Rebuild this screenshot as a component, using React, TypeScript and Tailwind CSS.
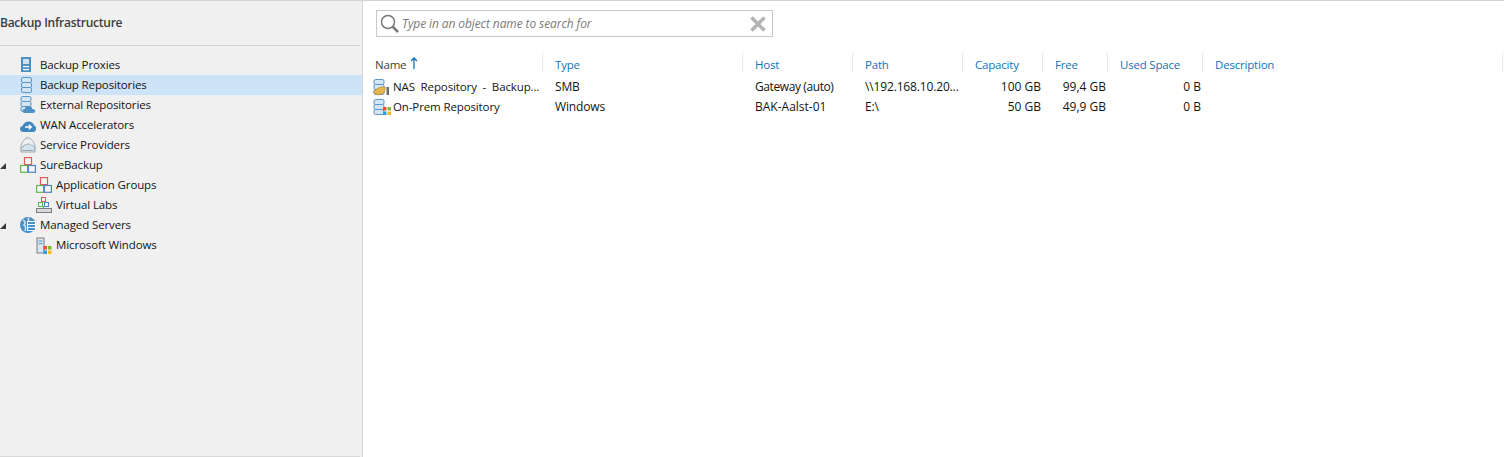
import type { ReactNode } from "react";

const font = { fontFamily: "'Open Sans', 'Noto Sans', sans-serif" };

function DbStack({ x = 0, y = 0, w = 10 }: { x?: number; y?: number; w?: number }) {
  return (
    <g transform={`translate(${x} ${y})`} fill="#d3e5f3" stroke="#5b97c6" strokeWidth="1">
      <rect x="0.5" y="0.5" width={w} height="5" rx="1.5" />
      <rect x="0.5" y="5.5" width={w} height="5" rx="1.5" />
      <rect x="0.5" y="10.5" width={w} height="5" rx="1.5" />
    </g>
  );
}

function WinFlag({ x, y, s = 4 }: { x: number; y: number; s?: number }) {
  return (
    <g transform={`translate(${x} ${y})`}>
      <rect x="0" y="0" width={s} height={s} fill="#e8512f" />
      <rect x={s + 1} y="0" width={s} height={s} fill="#7fba2c" />
      <rect x="0" y={s + 1} width={s} height={s} fill="#2a9fe0" />
      <rect x={s + 1} y={s + 1} width={s} height={s} fill="#fbbc11" />
    </g>
  );
}

function Blocks() {
  return (
    <g fill="#f5f5f5" strokeWidth="1.2">
      <rect x="4.500" y="0.600" width="7" height="7" stroke="#e25b5b" />
      <rect x="0.600" y="8.500" width="7" height="6.800" stroke="#5cb84a" />
      <rect x="8.400" y="8.500" width="7" height="6.800" stroke="#4a86c8" />
    </g>
  );
}

const icons: Record<string, ReactNode> = {
  proxy: (
    <>
      <rect x="1" y="0" width="10" height="15" fill="#4f90c3" />
      <rect x="3" y="2" width="6" height="5" fill="#cfe2f1" />
      <rect x="3" y="9" width="6" height="1.200" fill="#ffffff" />
      <rect x="3" y="12" width="6" height="1.200" fill="#ffffff" />
    </>
  ),
  repo: <DbStack x={1} y={0} />,
  external: (
    <>
      <DbStack x={0.500} y={-1} />
      <path d="M5 16c-1.600 0-2.500-.9-2.500-2s.9-2 2.200-2c.5-2 2-3 3.800-3 2 0 3.500 1.300 3.900 3 1.500 0 2.900.9 2.900 2s-1 2-2.300 2z" fill="#4f90c3" />
    </>
  ),
  wan: (
    <>
      <path d="M3.500 15C1.500 15 0 13.700 0 12c0-1.600 1.200-2.900 2.800-3.200C3.400 6.200 5.800 4.500 8.500 4.500c2.900 0 5.200 1.800 5.800 4.300 1.500.3 1.700 1 1.700 3 0 2-1 3.200-2.500 3.200z" fill="#3f87bd" />
      <path d="M5 9.300h3.800V7l3.700 3-3.700 3v-2.300H5z" fill="#ffffff" />
    </>
  ),
  provider: (
    <>
      <path d="M1 8.500C2.500 4 5 1.200 8 0.800c3 .4 5.500 3.200 7 7.700V15H1z" fill="#eef1f4" stroke="#9aa5ae" />
      <path d="M2.800 13.500c-1 0-1.800-.8-1.800-1.600 0-1 .9-1.700 2-1.700.5-2 2-3 3.500-2.500 1.200-1.200 4-1 5 .8 1.800 0 3.500 1.200 3.500 2.500 0 1.300-1 2.500-2.500 2.500z" fill="#d3e3f0" stroke="#9aa5ae" />
    </>
  ),
  surebackup: <Blocks />,
  labs: (
    <>
      <g fill="#f5f5f5" strokeWidth="1">
        <rect x="5.500" y="0.500" width="4" height="4" stroke="#e25b5b" />
        <rect x="2.500" y="5.500" width="4" height="4" stroke="#5cb84a" />
        <rect x="8.500" y="5.500" width="4" height="4" stroke="#4a86c8" />
      </g>
      <path d="M7.500 9.500v2" stroke="#7c7c7c" />
      <rect x="0.500" y="11.500" width="15" height="4" fill="#d5d9dd" stroke="#7c7c7c" />
    </>
  ),
  managed: (
    <>
      <circle cx="8" cy="8" r="8" fill="#4a8fc4" />
      <path d="M3 3c2 1 3 3 1 5 2 1 2 3 1 6M9 1c-1 1-1 2 0 3" stroke="#d7e7f3" fill="none" strokeWidth="1.500" />
      <rect x="7" y="4" width="9" height="10" fill="#ffffff" />
      <rect x="8" y="5" width="7" height="2" fill="#4a8fc4" />
      <rect x="8" y="8" width="7" height="2" fill="#4a8fc4" />
      <rect x="8" y="11" width="7" height="2" fill="#4a8fc4" />
    </>
  ),
  windows: (
    <>
      <rect x="1" y="1" width="7" height="15" fill="#d8e6f3" stroke="#7c7c7c" />
      <rect x="2.500" y="3.500" width="4" height="1.200" fill="#6c9fcb" />
      <rect x="2.500" y="6" width="4" height="1.200" fill="#6c9fcb" />
      <WinFlag x={7.500} y={9} s={3.500} />
    </>
  ),
  nas: (
    <>
      <DbStack x={0.500} y={0} />
      <path d="M0.500 13.500c2-3.500 5-5 8.500-5.500l3.500.5-1.500 5.500-6 2z" fill="#e8b64c" stroke="#b98a2a" strokeWidth="0.700" />
      <rect x="13.500" y="8" width="2.500" height="8" fill="#6b6b6b" />
    </>
  ),
  onprem: (
    <>
      <DbStack x={0.500} y={0} />
      <WinFlag x={10} y={8} s={3.500} />
    </>
  ),
};

function Icon({ name, className = "" }: { name: string; className?: string }) {
  return (
    <svg width="16" height="16" viewBox="0 0 16 16" className={`shrink-0 overflow-visible ${className}`}>
      {icons[name]}
    </svg>
  );
}

const tree = [
  { label: "Backup Proxies", icon: "proxy" },
  { label: "Backup Repositories", icon: "repo", selected: true },
  { label: "External Repositories", icon: "external" },
  { label: "WAN Accelerators", icon: "wan" },
  { label: "Service Providers", icon: "provider" },
  { label: "SureBackup", icon: "surebackup", open: true },
  { label: "Application Groups", icon: "surebackup", child: true },
  { label: "Virtual Labs", icon: "labs", child: true },
  { label: "Managed Servers", icon: "managed", open: true },
  { label: "Microsoft Windows", icon: "windows", child: true },
];

const columns = ["Name", "Type", "Host", "Path", "Capacity", "Free", "Used Space", "Description"];

const cols = "grid grid-cols-[180px_200px_110px_110px_80px_65px_95px_300px]";
const small = "text-[11.5px] tracking-[-0.12px]";

const rows = [
  { icon: "nas", name: "NAS  Repository  -  Backup...", type: "SMB", host: "Gateway (auto)", hostClass: "tracking-[-0.4px]", path: "\\\\192.168.10.20...", capacity: "100 GB", free: "99,4 GB", used: "0 B" },
  { icon: "onprem", name: "On-Prem Repository", type: "Windows", host: "BAK-Aalst-01", hostClass: "", path: "E:\\", capacity: "50 GB", free: "49,9 GB", used: "0 B" },
];

export default function App() {
  return (
    <div className="flex h-[457px] w-full overflow-hidden border-t border-[#d4d4d4] bg-white text-[12px] text-[#141414]" style={font}>
      {/* left tree */}
      <aside className="flex w-[363px] shrink-0 flex-col border-r border-[#d4d4d4] bg-[#f0f0f0]">
        <div className="mr-[2px] flex h-[45px] shrink-0 items-center border-b border-[#d4d4d4] font-semibold tracking-[-0.25px] text-[#3c3c3c]">
          Backup Infrastructure
        </div>
        <ul className="mt-[9px] flex-1">
          {tree.map((item) => (
            <li
              key={item.label}
              className={`relative flex h-5 items-center ${item.child ? "pl-9" : "pl-5"} ${item.selected ? "bg-[#cde4f8]" : ""}`}
            >
              {item.open && (
                <span className="absolute left-0 top-[8px] size-0 border-b-[6px] border-l-[6px] border-b-[#3a3a3a] border-l-transparent" />
              )}
              <Icon name={item.icon} />
              <span className={`ml-1 whitespace-nowrap ${small}`}>{item.label}</span>
            </li>
          ))}
        </ul>
        <div className="mr-[2px] h-px shrink-0 bg-[#d9d9d9]" />
      </aside>

      {/* list view */}
      <main className="min-w-0 flex-1">
        <div className="ml-[13px] mt-[9px] flex h-[27px] w-[397px] items-center border border-[#c8c8c8] pl-[3px] pr-[6px]">
          <svg width="20" height="20" viewBox="0 0 20 20" fill="none" stroke="#7a7a7a" className="shrink-0">
            <circle cx="8" cy="8" r="6.500" strokeWidth="1.500" />
            <path d="M12.500 12.500L18 18" strokeWidth="2.500" />
          </svg>
          <span className="ml-[2px] flex-1 pt-px italic tracking-[-0.1px] text-[#7b7b7b]">Type in an object name to search for</span>
          <svg width="16" height="16" viewBox="0 0 16 16" stroke="#b4b4b4" strokeWidth="3.500" className="shrink-0">
            <path d="M1.500 1.500l13 13M14.500 1.500l-13 13" />
          </svg>
        </div>

        <div className={`${cols} mt-4 h-5 items-center`}>
          {columns.map((c, i) => (
            <div key={c} className="flex h-5 items-center border-r border-[#e8e8e8] pl-3 pt-[3px]">
              <span className={`text-[11.5px] tracking-[-0.2px] ${i === 0 ? "text-[#404040]" : "text-[#0f74bd]"}`}>{c}</span>
              {i === 0 && (
                <svg width="8" height="12" viewBox="0 0 8 12" fill="none" stroke="#1272b6" className="-mt-[3px] ml-1">
                  <path d="M4 12V1M1 4l3-3 3 3" strokeWidth="1.300" />
                </svg>
              )}
            </div>
          ))}
        </div>

        <div className="mt-1">
          {rows.map((r) => (
            <div key={r.name} className={`${cols} h-5 items-center`}>
              <div className="flex items-center pl-[10px]">
                <Icon name={r.icon} />
                <span className={`ml-1 whitespace-pre ${small}`}>{r.name}</span>
              </div>
              <div className="pl-3 tracking-[-0.15px]">{r.type}</div>
              <div className={`pl-3 ${r.hostClass}`}>{r.host}</div>
              <div className="whitespace-nowrap pl-3 tracking-[-0.15px]">{r.path}</div>
              <div className="pr-[2px] text-right">{r.capacity}</div>
              <div className="pr-[2px] text-right">{r.free}</div>
              <div className="pr-[2px] text-right">{r.used}</div>
              <div />
            </div>
          ))}
        </div>
      </main>
    </div>
  );
}
